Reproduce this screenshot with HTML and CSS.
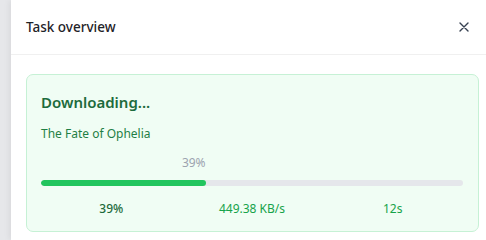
FILE: index.html
```html
<!DOCTYPE html>
<html lang="en">
<head>
<meta charset="utf-8">
<title>Task overview</title>
<link rel="stylesheet" href="styles.css">
</head>
<body>
<div class="backdrop"></div>
<section class="drawer">
  <header class="drawer-header">
    <h2 class="drawer-title">Task overview</h2>
    <button class="close-btn" aria-label="Close">
      <svg width="10" height="10" viewBox="0 0 10 10" aria-hidden="true"><path d="M1 1L9 9M9 1L1 9" stroke="#374151" stroke-width="1.4" stroke-linecap="round"/></svg>
    </button>
  </header>
  <div class="drawer-body">
    <div class="task-card">
      <h3 class="task-status">Downloading...</h3>
      <p class="task-name">The Fate of Ophelia</p>
      <div class="progress-label-row">
        <span class="progress-label" style="width:39%">39%</span>
      </div>
      <div class="progress-track"><div class="progress-fill" style="width:39%"></div></div>
      <div class="stats">
        <span class="stat stat-percent">39%</span>
        <span class="stat">449.38 KB/s</span>
        <span class="stat">12s</span>
      </div>
    </div>
  </div>
</section>
</body>
</html>
```
FILE: styles.css
```css
* { box-sizing: border-box; }
html, body { margin: 0; padding: 0; height: 100%; }
body {
  display: flex;
  font-family: "Noto Sans", "Open Sans", "Liberation Sans", sans-serif;
  background: #ffffff;
  overflow: hidden;
}
.backdrop {
  width: 11px;
  flex: none;
  background: #e6e7ea;
}
.drawer {
  flex: 1;
  background: #ffffff;
  box-shadow: -2px 0 6px rgba(0,0,0,0.06);
  display: flex;
  flex-direction: column;
}
.drawer-header {
  height: 55px;
  display: flex;
  align-items: center;
  justify-content: space-between;
  padding: 0 14px 0 15px;
  border-bottom: 1px solid #f0f0f0;
}
.drawer-title {
  margin: 0;
  font-size: 13.5px;
  font-weight: 500;
  color: #1f2328;
}
.close-btn {
  border: 0;
  background: none;
  padding: 0;
  width: 16px;
  height: 16px;
  display: flex;
  align-items: center;
  justify-content: center;
  cursor: pointer;
}
.drawer-body {
  padding: 19px 7px 0 15px;
}
.task-card {
  background: #f0fdf4;
  border: 1px solid #c6f1d5;
  border-radius: 7px;
  padding: 16px 15px 14px 14px;
}
.task-status {
  margin: 0;
  font-size: 15px;
  line-height: 22px;
  font-weight: 600;
  color: #1d6b3c;
}
.task-name {
  margin: 12px 0 0;
  font-size: 12px;
  line-height: 18px;
  color: #1f7f45;
}
.progress-label-row {
  display: flex;
  margin-top: 12px;
}
.progress-label {
  text-align: right;
  font-size: 12px;
  line-height: 16px;
  color: #9ca3af;
}
.progress-track {
  margin-top: 9px;
  height: 6px;
  border-radius: 3px;
  background: #e5e7eb;
  overflow: hidden;
}
.progress-fill {
  height: 100%;
  border-radius: 3px;
  background: #22c55e;
}
.stats {
  display: grid;
  grid-template-columns: 1fr 1fr 1fr;
  margin-top: 15px;
}
.stat {
  text-align: center;
  font-size: 12px;
  line-height: 16px;
  color: #16a34a;
}
.stat-percent {
  color: #1d6b3c;
  font-weight: 500;
}
```
